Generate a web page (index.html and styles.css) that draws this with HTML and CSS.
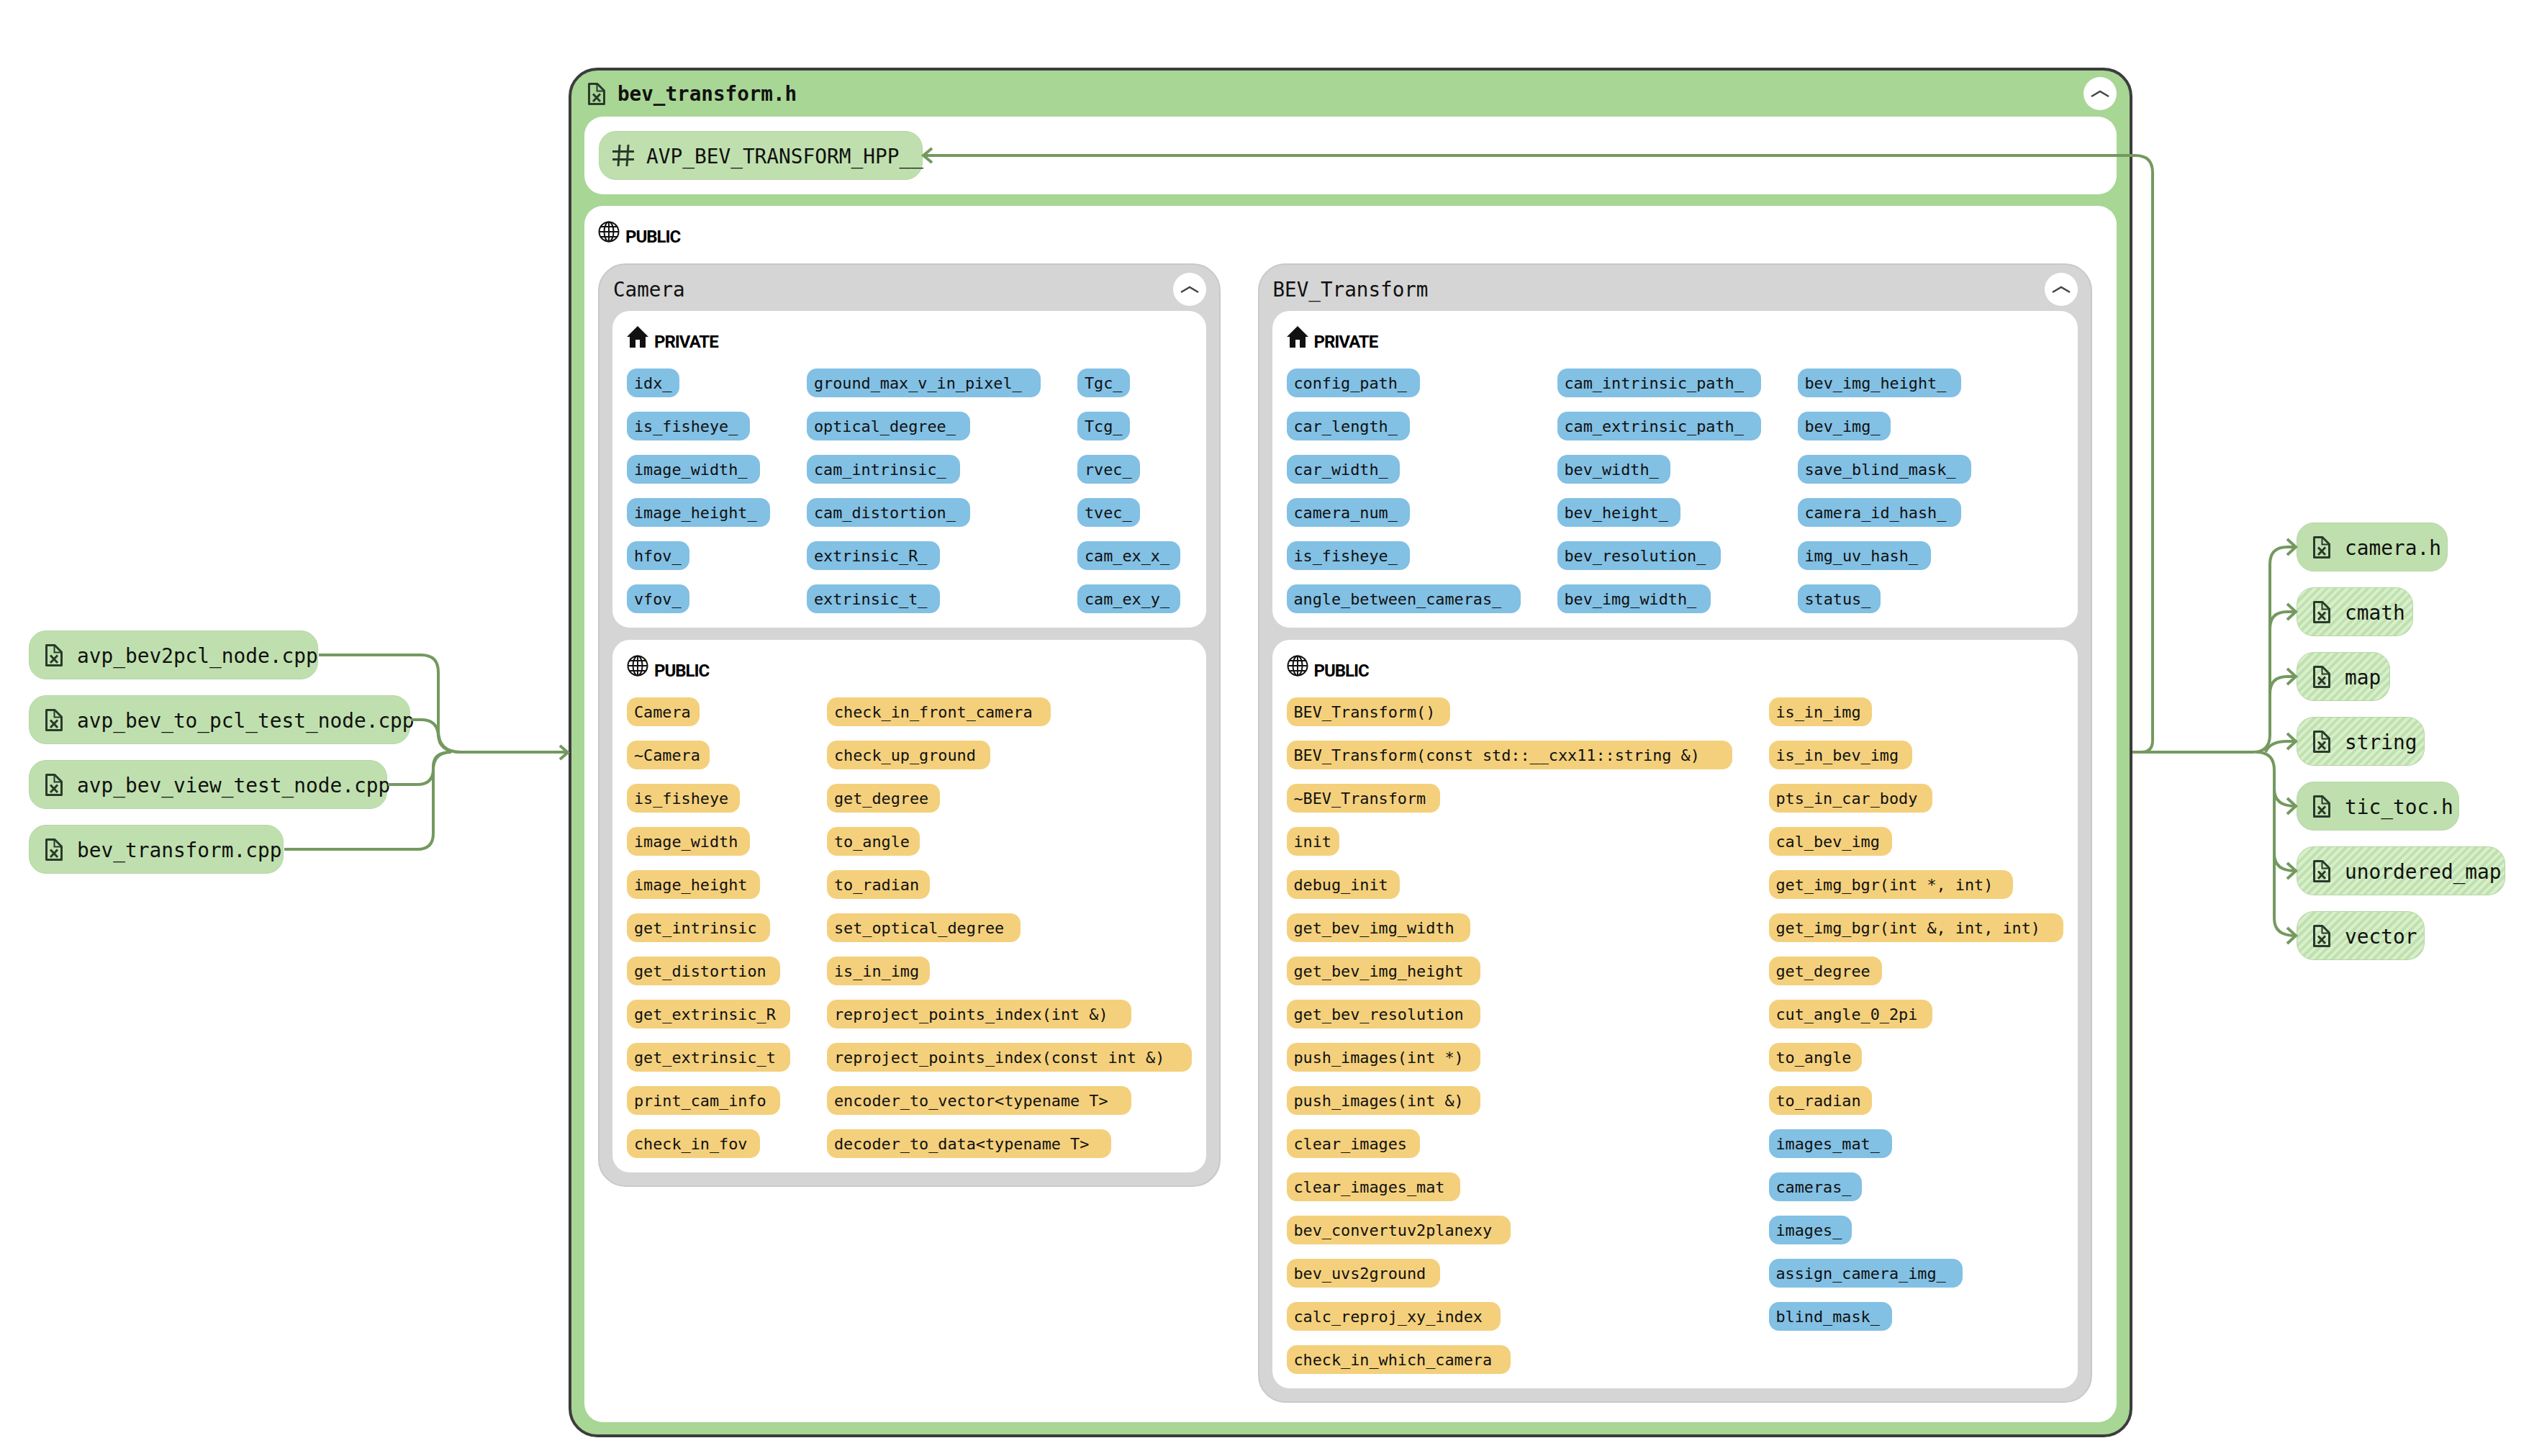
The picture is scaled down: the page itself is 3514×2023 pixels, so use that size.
FILE: index.html
```html
<!DOCTYPE html>
<html lang="en">
<head>
<meta charset="utf-8">
<title>bev_transform.h</title>
<link rel="stylesheet" href="styles.css">
</head>
<body>
<svg width="0" height="0" class="defs">
  <defs>
    <symbol id="file" viewBox="0 0 24 31">
      <path d="M1.500 1.500H13L22.500 11V29.500H1.500Z" fill="none" stroke="currentColor" stroke-width="3" stroke-linejoin="round"/>
      <path d="M12.500 2V11.500H22" fill="none" stroke="currentColor" stroke-width="2"/>
      <path d="M7 15.500L17 26M17 15.500L7 26" fill="none" stroke="currentColor" stroke-width="3"/>
    </symbol>
    <symbol id="globe" viewBox="0 0 30 30">
      <g fill="none" stroke="currentColor" stroke-width="2">
        <circle cx="15" cy="15" r="13.500"/>
        <ellipse cx="15" cy="15" rx="6.500" ry="13.500"/>
        <path d="M15 1.500V28.500M1.500 15H28.500M3.500 8H26.500M3.500 22H26.500"/>
      </g>
    </symbol>
    <symbol id="home" viewBox="0 0 30 30">
      <path d="M15 0L30 15H26V30H18V19H12V30H4V15H0Z" fill="currentColor"/>
    </symbol>
    <symbol id="chev" viewBox="0 0 26 10">
      <path d="M1 9L13 2L25 9" fill="none" stroke="currentColor" stroke-width="2.400"/>
    </symbol>
  </defs>
</svg>

<div class="stage">

  <div class="node n-l1" style="--n:20"><svg class="ficon"><use href="#file"/></svg><span>avp_bev2pcl_node.cpp</span></div>
  <div class="node n-l2" style="--n:28"><svg class="ficon"><use href="#file"/></svg><span>avp_bev_to_pcl_test_node.cpp</span></div>
  <div class="node n-l3" style="--n:26"><svg class="ficon"><use href="#file"/></svg><span>avp_bev_view_test_node.cpp</span></div>
  <div class="node n-l4" style="--n:17"><svg class="ficon"><use href="#file"/></svg><span>bev_transform.cpp</span></div>

  <div class="node n-r1" style="--n:8"><svg class="ficon"><use href="#file"/></svg><span>camera.h</span></div>
  <div class="node hatch n-r2" style="--n:5"><svg class="ficon"><use href="#file"/></svg><span>cmath</span></div>
  <div class="node hatch n-r3" style="--n:3"><svg class="ficon"><use href="#file"/></svg><span>map</span></div>
  <div class="node hatch n-r4" style="--n:6"><svg class="ficon"><use href="#file"/></svg><span>string</span></div>
  <div class="node n-r5" style="--n:9"><svg class="ficon"><use href="#file"/></svg><span>tic_toc.h</span></div>
  <div class="node hatch n-r6" style="--n:13"><svg class="ficon"><use href="#file"/></svg><span>unordered_map</span></div>
  <div class="node hatch n-r7" style="--n:6"><svg class="ficon"><use href="#file"/></svg><span>vector</span></div>

  <div class="main">
    <div class="main-head">
      <svg class="ficon head-icon"><use href="#file"/></svg>
      <span class="main-title">bev_transform.h</span>
      <button class="toggle"><svg class="chev"><use href="#chev"/></svg></button>
    </div>
    <div class="panel macro-panel">
      <div class="node macro" style="--n:23">
        <svg class="hash" viewBox="0 0 30 32"><path d="M10 1L8 31M22 1L20 31M0 10.500H30M0 21.500H30" fill="none" stroke="currentColor" stroke-width="3"/></svg>
        <span>AVP_BEV_TRANSFORM_HPP__</span>
      </div>
    </div>
    <div class="panel outer-panel">
      <div class="label outer-label"><svg class="label-icon"><use href="#globe"/></svg><span>PUBLIC</span></div>
      <div class="classes">

        <div class="cls">
          <div class="cls-head"><span class="cls-title">Camera</span><button class="toggle"><svg class="chev"><use href="#chev"/></svg></button></div>
          <div class="section section-priv">
            <div class="label"><svg class="label-icon"><use href="#home"/></svg><span>PRIVATE</span></div>
            <div class="pills rows-6">
              <div class="pill var" style="--n:4">idx_</div>
              <div class="pill var" style="--n:11">is_fisheye_</div>
              <div class="pill var" style="--n:12">image_width_</div>
              <div class="pill var" style="--n:13">image_height_</div>
              <div class="pill var" style="--n:5">hfov_</div>
              <div class="pill var" style="--n:5">vfov_</div>
              <div class="pill var" style="--n:22">ground_max_v_in_pixel_</div>
              <div class="pill var" style="--n:15">optical_degree_</div>
              <div class="pill var" style="--n:14">cam_intrinsic_</div>
              <div class="pill var" style="--n:15">cam_distortion_</div>
              <div class="pill var" style="--n:12">extrinsic_R_</div>
              <div class="pill var" style="--n:12">extrinsic_t_</div>
              <div class="pill var" style="--n:4">Tgc_</div>
              <div class="pill var" style="--n:4">Tcg_</div>
              <div class="pill var" style="--n:5">rvec_</div>
              <div class="pill var" style="--n:5">tvec_</div>
              <div class="pill var" style="--n:9">cam_ex_x_</div>
              <div class="pill var" style="--n:9">cam_ex_y_</div>
            </div>
          </div>
          <div class="section">
            <div class="label"><svg class="label-icon"><use href="#globe"/></svg><span>PUBLIC</span></div>
            <div class="pills rows-11">
              <div class="pill fn" style="--n:6">Camera</div>
              <div class="pill fn" style="--n:7">~Camera</div>
              <div class="pill fn" style="--n:10">is_fisheye</div>
              <div class="pill fn" style="--n:11">image_width</div>
              <div class="pill fn" style="--n:12">image_height</div>
              <div class="pill fn" style="--n:13">get_intrinsic</div>
              <div class="pill fn" style="--n:14">get_distortion</div>
              <div class="pill fn" style="--n:15">get_extrinsic_R</div>
              <div class="pill fn" style="--n:15">get_extrinsic_t</div>
              <div class="pill fn" style="--n:14">print_cam_info</div>
              <div class="pill fn" style="--n:12">check_in_fov</div>
              <div class="pill fn" style="--n:21">check_in_front_camera</div>
              <div class="pill fn" style="--n:15">check_up_ground</div>
              <div class="pill fn" style="--n:10">get_degree</div>
              <div class="pill fn" style="--n:8">to_angle</div>
              <div class="pill fn" style="--n:9">to_radian</div>
              <div class="pill fn" style="--n:18">set_optical_degree</div>
              <div class="pill fn" style="--n:9">is_in_img</div>
              <div class="pill fn" style="--n:29">reproject_points_index(int &amp;)</div>
              <div class="pill fn" style="--n:35">reproject_points_index(const int &amp;)</div>
              <div class="pill fn" style="--n:29">encoder_to_vector&lt;typename T&gt;</div>
              <div class="pill fn" style="--n:27">decoder_to_data&lt;typename T&gt;</div>
            </div>
          </div>
        </div>

        <div class="cls">
          <div class="cls-head"><span class="cls-title">BEV_Transform</span><button class="toggle"><svg class="chev"><use href="#chev"/></svg></button></div>
          <div class="section section-priv">
            <div class="label"><svg class="label-icon"><use href="#home"/></svg><span>PRIVATE</span></div>
            <div class="pills rows-6">
              <div class="pill var" style="--n:12">config_path_</div>
              <div class="pill var" style="--n:11">car_length_</div>
              <div class="pill var" style="--n:10">car_width_</div>
              <div class="pill var" style="--n:11">camera_num_</div>
              <div class="pill var" style="--n:11">is_fisheye_</div>
              <div class="pill var" style="--n:22">angle_between_cameras_</div>
              <div class="pill var" style="--n:19">cam_intrinsic_path_</div>
              <div class="pill var" style="--n:19">cam_extrinsic_path_</div>
              <div class="pill var" style="--n:10">bev_width_</div>
              <div class="pill var" style="--n:11">bev_height_</div>
              <div class="pill var" style="--n:15">bev_resolution_</div>
              <div class="pill var" style="--n:14">bev_img_width_</div>
              <div class="pill var" style="--n:15">bev_img_height_</div>
              <div class="pill var" style="--n:8">bev_img_</div>
              <div class="pill var" style="--n:16">save_blind_mask_</div>
              <div class="pill var" style="--n:15">camera_id_hash_</div>
              <div class="pill var" style="--n:12">img_uv_hash_</div>
              <div class="pill var" style="--n:7">status_</div>
            </div>
          </div>
          <div class="section">
            <div class="label"><svg class="label-icon"><use href="#globe"/></svg><span>PUBLIC</span></div>
            <div class="pills rows-16">
              <div class="pill fn" style="--n:15">BEV_Transform()</div>
              <div class="pill fn" style="--n:43">BEV_Transform(const std::__cxx11::string &amp;)</div>
              <div class="pill fn" style="--n:14">~BEV_Transform</div>
              <div class="pill fn" style="--n:4">init</div>
              <div class="pill fn" style="--n:10">debug_init</div>
              <div class="pill fn" style="--n:17">get_bev_img_width</div>
              <div class="pill fn" style="--n:18">get_bev_img_height</div>
              <div class="pill fn" style="--n:18">get_bev_resolution</div>
              <div class="pill fn" style="--n:18">push_images(int *)</div>
              <div class="pill fn" style="--n:18">push_images(int &amp;)</div>
              <div class="pill fn" style="--n:12">clear_images</div>
              <div class="pill fn" style="--n:16">clear_images_mat</div>
              <div class="pill fn" style="--n:21">bev_convertuv2planexy</div>
              <div class="pill fn" style="--n:14">bev_uvs2ground</div>
              <div class="pill fn" style="--n:20">calc_reproj_xy_index</div>
              <div class="pill fn" style="--n:21">check_in_which_camera</div>
              <div class="pill fn" style="--n:9">is_in_img</div>
              <div class="pill fn" style="--n:13">is_in_bev_img</div>
              <div class="pill fn" style="--n:15">pts_in_car_body</div>
              <div class="pill fn" style="--n:11">cal_bev_img</div>
              <div class="pill fn" style="--n:23">get_img_bgr(int *, int)</div>
              <div class="pill fn" style="--n:28">get_img_bgr(int &amp;, int, int)</div>
              <div class="pill fn" style="--n:10">get_degree</div>
              <div class="pill fn" style="--n:15">cut_angle_0_2pi</div>
              <div class="pill fn" style="--n:8">to_angle</div>
              <div class="pill fn" style="--n:9">to_radian</div>
              <div class="pill var" style="--n:11">images_mat_</div>
              <div class="pill var" style="--n:8">cameras_</div>
              <div class="pill var" style="--n:7">images_</div>
              <div class="pill var" style="--n:18">assign_camera_img_</div>
              <div class="pill var" style="--n:11">blind_mask_</div>
            </div>
          </div>
        </div>

      </div>
    </div>
  </div>

  <svg class="edges" viewBox="0 0 3514 2023">
    <path d="M443 910H585Q609 910 609 934V1015Q609 1045 640 1045H788"/>
    <path d="M571 1000H585Q609 1000 609 1024V1020Q609 1045 640 1045"/>
    <path d="M539 1090H580Q602 1090 602 1068V1065Q602 1045 627 1045"/>
    <path d="M395 1180H580Q602 1180 602 1158V1070Q602 1045 627 1045"/>
    <path d="M778 1036L789 1045.500L778 1055"/>

    <path d="M2963 1045H2975Q2991 1045 2991 1029V240Q2991 216 2967 216H1284"/>
    <path d="M1295 206L1283 216L1295 226"/>

    <path d="M2963 1045H3130Q3154 1045 3154 1021V784Q3154 760 3178 760H3189"/>
    <path d="M3154 874Q3154 850 3178 850H3189"/>
    <path d="M3154 964Q3154 940 3178 940H3189"/>
    <path d="M3148 1045Q3154 1030 3178 1030H3189"/>
    <path d="M3135 1045Q3160 1045 3160 1070V1276Q3160 1300 3189 1300"/>
    <path d="M3160 1096Q3160 1120 3189 1120"/>
    <path d="M3160 1186Q3160 1210 3189 1210"/>
    <path d="M3178 749L3190 760L3178 771M3178 839L3190 850L3178 861M3178 929L3190 940L3178 951M3178 1019L3190 1030L3178 1041M3178 1109L3190 1120L3178 1131M3178 1199L3190 1210L3178 1221M3178 1289L3190 1300L3178 1311"/>
  </svg>
</div>
</body>
</html>
```
FILE: styles.css
```css
* { box-sizing: border-box; }
html, body { margin: 0; padding: 0; background: #fff; }
.defs { position: absolute; }
.stage {
  position: relative;
  width: 3514px;
  height: 2023px;
  overflow: hidden;
  font-family: "DejaVu Sans Mono", "Liberation Mono", monospace;
  color: #111;
}

/* file nodes on the graph canvas */
.node {
  position: absolute;
  display: flex;
  align-items: center;
  width: calc(var(--n) * 16px + 82px);
  height: 68px;
  padding-left: 22px;
  background: #bfe0ae;
  border: 1.5px solid #b6d6a6;
  border-radius: 24px;
  font-size: 27.800px;
  white-space: nowrap;
}
.hatch {
  background: repeating-linear-gradient(-45deg, #c0e1af 0 4px, #d7efca 4px 8px);
}
.ficon { width: 24px; height: 31px; flex: none; margin-right: 20px; color: #2a3a2c; }
.node span { position: relative; top: 1px; }
.n-l1 { left: 40px; top: 876px; }
.n-l2 { left: 40px; top: 966px; }
.n-l3 { left: 40px; top: 1056px; }
.n-l4 { left: 40px; top: 1146px; }
.n-r1 { left: 3191px; top: 726px; }
.n-r2 { left: 3191px; top: 816px; }
.n-r3 { left: 3191px; top: 906px; }
.n-r4 { left: 3191px; top: 996px; }
.n-r5 { left: 3191px; top: 1086px; }
.n-r6 { left: 3191px; top: 1176px; }
.n-r7 { left: 3191px; top: 1266px; }

/* main file container */
.main {
  position: absolute;
  left: 790px;
  top: 94px;
  width: 2173px;
  height: 1903px;
  display: flex;
  flex-direction: column;
  gap: 16px;
  padding: 0 18px 17px;
  background: #a8d695;
  border: 4px solid #3c3c3c;
  border-radius: 40px;
}
.main-head {
  display: flex;
  align-items: center;
  height: 64px;
  margin-bottom: -16px;
  padding-left: 5px;
}
.head-icon { margin-right: 17px; }
.main-title { font-size: 27.600px; font-weight: 700; flex: 1; }
.toggle {
  display: flex;
  align-items: center;
  justify-content: center;
  width: 46px;
  height: 46px;
  flex: none;
  padding: 0;
  border: 0;
  border-radius: 50%;
  background: #fff;
  color: #444;
}
.chev { width: 26px; height: 10px; }

.panel { background: #fff; border-radius: 26px; }
.macro-panel { height: 108px; padding: 20px; }
.macro {
  position: static;
  padding-left: 18px;
}
.hash { width: 30px; height: 32px; flex: none; margin-right: 17px; color: #2a3a2c; }
.outer-panel { flex: 1; padding: 20px 19px; }

.label {
  display: flex;
  align-items: flex-end;
  height: 60px;
  padding-top: 2px;
  padding-bottom: 25px;
  color: #000;
  font-family: Roboto, "Open Sans", sans-serif;
  font-size: 24px;
  font-weight: 700;
  letter-spacing: -1px;
  line-height: 1;
}
.label-icon { width: 30px; height: 30px; flex: none; margin-right: 8px; margin-bottom: 4px; color: #111; }
.classes { display: flex; align-items: flex-start; gap: 51.500px; }

.cls {
  display: flex;
  flex-direction: column;
  padding: 0 18px 18px;
  background: #d5d5d5;
  border: 2px solid #c9c9c9;
  border-radius: 38px;
}
.cls-head {
  display: flex;
  align-items: center;
  justify-content: space-between;
  height: 64px;
  padding-top: 4px;
}
.cls-title { font-size: 27.600px; padding-left: 1px; color: #111; }

.section {
  padding: 20px 20px 20px;
  background: #fff;
  border-radius: 24px;
}
.section-priv { margin-bottom: 17px; }

.pills {
  display: grid;
  grid-auto-flow: column;
  grid-auto-columns: max-content;
  column-gap: 51px;
  row-gap: 20px;
  justify-content: start;
}
.rows-6 { grid-template-rows: repeat(6, 40px); }
.rows-11 { grid-template-rows: repeat(11, 40px); }
.rows-16 { grid-template-rows: repeat(16, 40px); }

.pill {
  width: calc(var(--n) * 14px + 17px);
  height: 40px;
  padding-left: 10px;
  border-radius: 14px;
  font-size: 21.800px;
  line-height: 41px;
  white-space: nowrap;
  color: #111;
}
.var { background: #82c0e4; }
.fn { background: #f4d07c; }

.edges {
  position: absolute;
  left: 0;
  top: 0;
  width: 3514px;
  height: 2023px;
  pointer-events: none;
}
.edges path { fill: none; stroke: #74995f; stroke-width: 4; }
```
